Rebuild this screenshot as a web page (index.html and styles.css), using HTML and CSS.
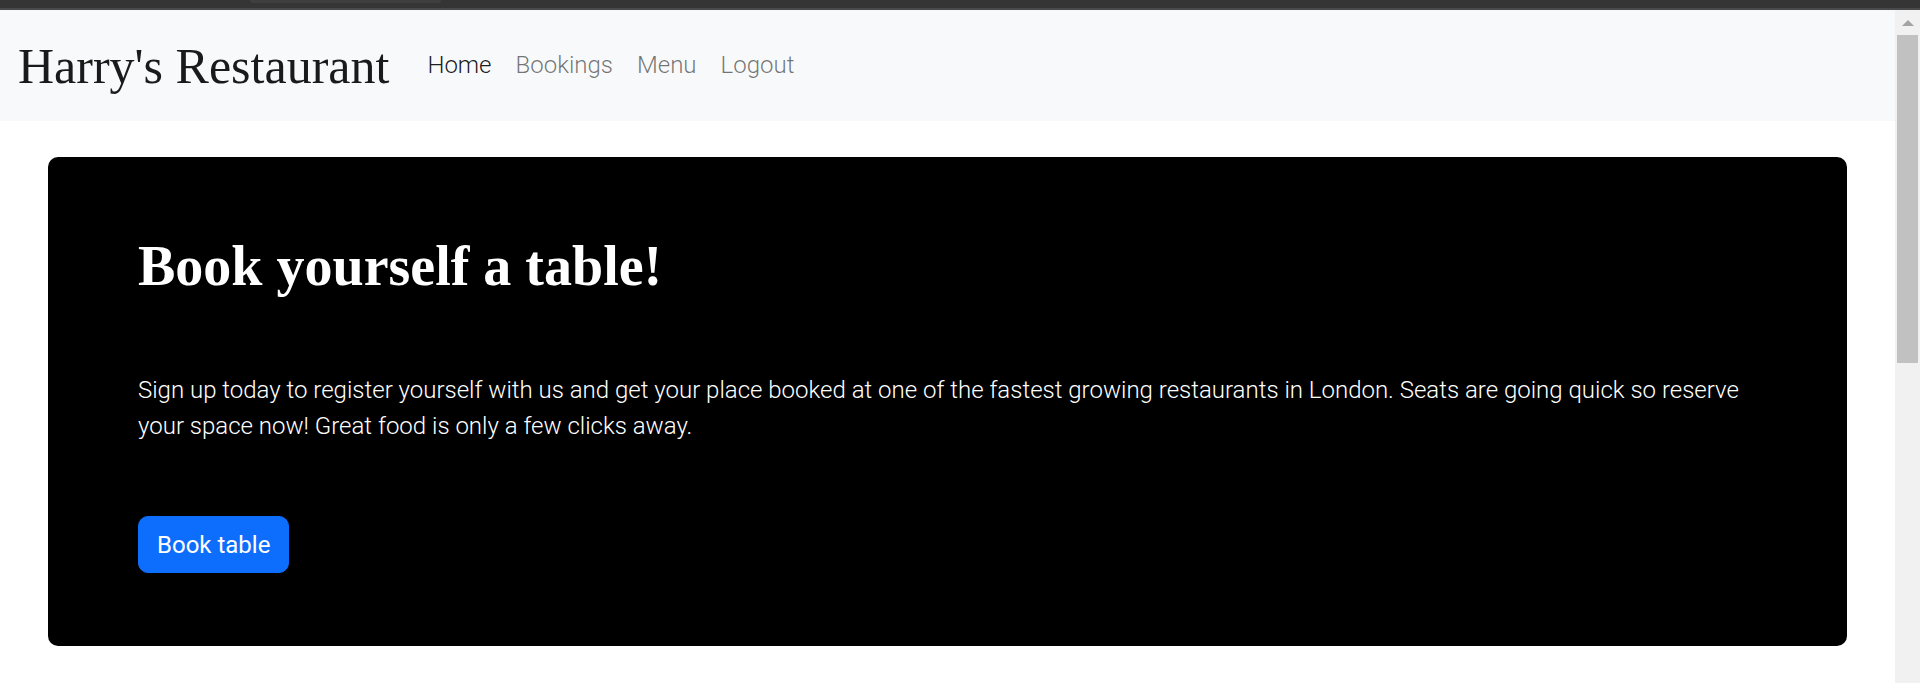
FILE: index.html
```html
<!DOCTYPE html>
<html lang="en">
<head>
<meta charset="utf-8">
<title>Harry's Restaurant</title>
<link rel="stylesheet" href="styles.css">
</head>
<body>
  <div class="chrome"><div class="chrome-tab"></div></div>
  <div class="window">
    <div class="page">
      <nav class="navbar">
        <a class="brand" href="#">Harry's Restaurant</a>
        <ul class="nav">
          <li><a class="nav-link active" href="#">Home</a></li>
          <li><a class="nav-link" href="#">Bookings</a></li>
          <li><a class="nav-link" href="#">Menu</a></li>
          <li><a class="nav-link" href="#">Logout</a></li>
        </ul>
      </nav>
      <main class="container">
        <section class="hero">
          <h1 class="hero-title">Book yourself a table!</h1>
          <p class="lead">Sign up today to register yourself with us and get your place booked at one of the fastest growing restaurants in London. Seats are going quick so reserve your space now! Great food is only a few clicks away.</p>
          <a class="btn" href="#">Book table</a>
        </section>
      </main>
    </div>
    <div class="scrollbar">
      <div class="scroll-arrow"></div>
      <div class="scroll-thumb"></div>
    </div>
  </div>
</body>
</html>
```

FILE: styles.css
```css
* { box-sizing: border-box; }

html, body {
  margin: 0;
  padding: 0;
  height: 683px;
  overflow: hidden;
  background: #ffffff;
}

body {
  font-family: Roboto, "Liberation Sans", sans-serif;
  color: #212529;
}

.chrome {
  height: 10px;
  background: #353535;
  border-bottom: 2px solid #4a4a4a;
}

.chrome-tab {
  width: 191px;
  height: 3px;
  margin-left: 250px;
  background: #3f3f3f;
  border-radius: 0 0 6px 6px;
}

.window {
  display: flex;
  height: 673px;
}

.page {
  flex: 1;
  min-width: 0;
}

.navbar {
  display: flex;
  align-items: center;
  height: 111px;
  padding: 0 18px;
  background: #f8f9fa;
}

.brand {
  font-family: "Liberation Serif", "DejaVu Serif", serif;
  font-size: 50px;
  line-height: 1;
  color: #1a1a1a;
  text-decoration: none;
  margin-right: 26px;
  white-space: nowrap;
}

.nav {
  display: flex;
  list-style: none;
  margin: 0;
  padding: 0;
}

.nav-link {
  display: block;
  padding: 0 12px;
  font-family: Roboto, sans-serif;
  font-weight: 300;
  font-size: 24px;
  line-height: 37.5px;
  color: rgba(0, 0, 0, 0.55);
  text-decoration: none;
}

.nav-link.active {
  color: rgba(0, 0, 0, 0.9);
}

.container {
  padding: 36px 48px 0;
}

.hero {
  display: flex;
  flex-direction: column;
  align-items: flex-start;
  gap: 72px;
  background: #000000;
  color: #ffffff;
  border-radius: 10px;
  padding: 76px 90px 73px;
}

.hero-title {
  margin: 0;
  font-family: "Liberation Serif", "DejaVu Serif", serif;
  font-weight: 700;
  font-size: 56px;
  line-height: 1.2;
}

.lead {
  margin: 0;
  font-family: Roboto, sans-serif;
  font-weight: 300;
  font-size: 24px;
  line-height: 36px;
}

.btn {
  display: inline-block;
  font-family: Roboto, sans-serif;
  font-weight: 400;
  font-size: 24px;
  line-height: 36px;
  padding: 9.5px 18px;
  border: 1px solid #0d6efd;
  border-radius: 10px;
  background: #0d6efd;
  color: #ffffff;
  text-decoration: none;
}

.scrollbar {
  width: 25px;
  flex: none;
  background: #f1f1f1;
  padding: 0 2px;
}

.scroll-arrow {
  width: 0;
  height: 0;
  margin: 10px auto 0;
  border-left: 6px solid transparent;
  border-right: 6px solid transparent;
  border-bottom: 6px solid #a3a3a3;
}

.scroll-thumb {
  margin-top: 9px;
  height: 328px;
  background: #c1c1c1;
}
```
